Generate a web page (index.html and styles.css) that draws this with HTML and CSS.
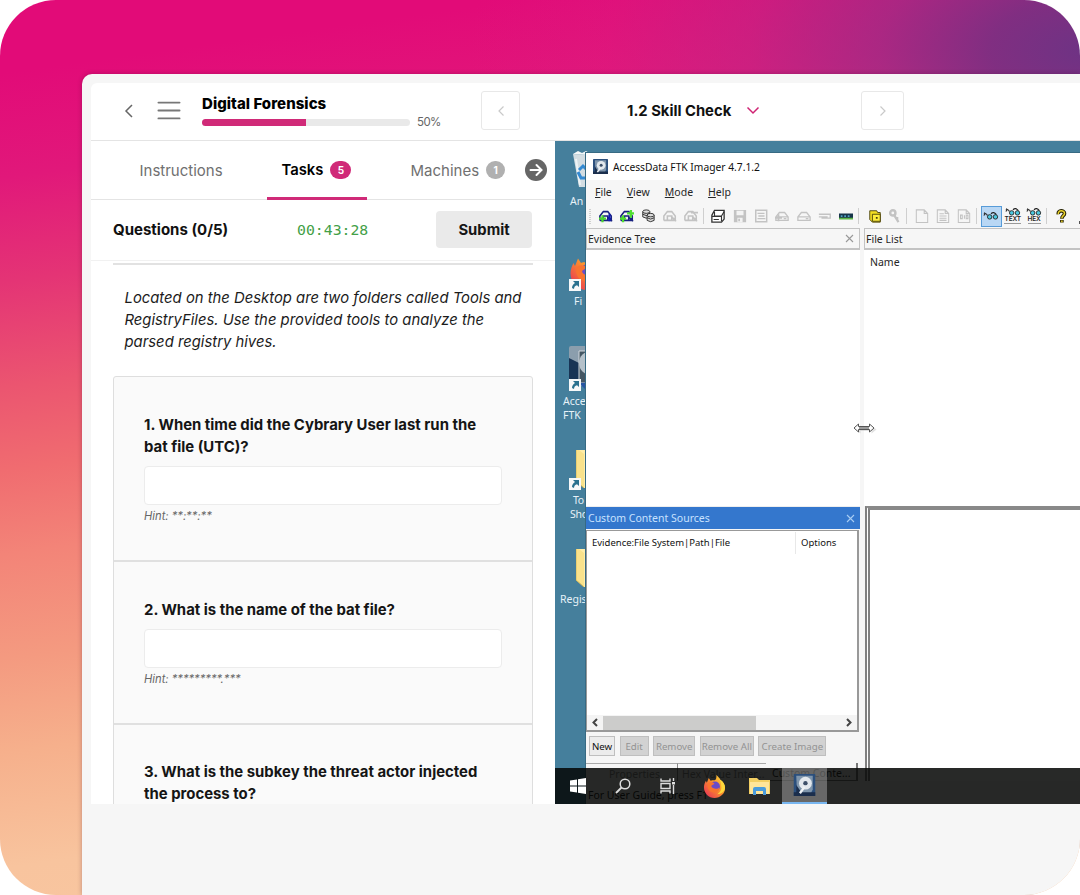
FILE: index.html
```html
<!DOCTYPE html>
<html lang="en">
<head>
<meta charset="utf-8">
<title>Digital Forensics</title>
<link rel="stylesheet" href="styles.css">
</head>
<body>
<svg class="defs" aria-hidden="true">
  <defs>
    <linearGradient id="fox" x1="1" y1="0" x2="0" y2="1"><stop offset="0" stop-color="#ffe13c"/><stop offset=".45" stop-color="#fb922c"/><stop offset="1" stop-color="#e5265c"/></linearGradient>
    <symbol id="firefox" viewBox="0 0 24 24">
      <path d="M14 0c2 2 3 3 4 5 3 2 5 5 5 9 0 5-5 10-11 10S1 19 1 13c0-3 1-5 2-7l1 2 2-5 2 3c2-1 4 0 5-1s1-3 1-5z" fill="url(#fox)"/>
      <circle cx="12.500" cy="12" r="5.200" fill="#6b4bc8"/>
      <path d="M5 9c2-2 5-2 7 0l-3 2c-1 1 1 3 3 3 2 1 4 0 5-1 0 4-4 6-7 5-4-1-6-5-5-9z" fill="#f9742f"/>
      <path d="M14 0c2 3 5 6 5 11 1 4-1 7-4 9 4 0 8-3 8-7 0-3-2-6-5-8-1-2-3-3-4-5z" fill="#ffd83b"/>
    </symbol>
    <symbol id="disk" viewBox="0 0 24 24">
      <rect width="24" height="24" rx="1" fill="#2b4f7c"/><path d="M3 2h18v15l-3 6H4z" fill="#7f95ab"/><path d="M3 12l7 10H3zM0 20h24v4H0z" fill="#1b2e4c"/>
      <circle cx="13" cy="10" r="7" fill="#e2e8ed"/><circle cx="13" cy="10" r="2.400" fill="#3d5069"/><path d="M12 14l-5 7" stroke="#eef2f5" stroke-width="2.500"/>
    </symbol>
    <symbol id="shortcut" viewBox="0 0 12 12"><path d="M0 0h12v12H0z" fill="#f6f8f9"/><path d="M4 2h6v6L8 6.300C6 7 5 8 5 10L3 9c0-2 1-4 3-5z" fill="#28718f"/></symbol>
    <symbol id="folder" viewBox="0 0 24 38"><path d="M0 0h24v38H8L0 31z" fill="#f9e28c"/><path d="M3 0h21v38H8V4z" fill="#ffeda8"/><path d="M0 0v31l8 7" fill="none" stroke="#d8bb5b"/></symbol>
    <symbol id="drive" viewBox="0 0 16 16"><path d="M1 9l4-5h6l4 5v4H1zM1 9h14M10 11h3" fill="none" stroke="currentColor" stroke-width="1.500"/></symbol>
    <symbol id="car" viewBox="0 0 16 16"><path d="M1 13V8l4-5h5l4 5v5M5 12V8h5v5M1 13h13M10 9l5 5" fill="none" stroke="currentColor" stroke-width="1.800"/></symbol>
    <symbol id="floppy" viewBox="0 0 16 16"><path d="M1 1h14v14H1z" fill="currentColor"/><path d="M4 2h8v5H4zM5 10h6v5H5z" fill="#f3f3f3"/><path d="M6 11h2v3H6z" fill="currentColor"/></symbol>
    <symbol id="page" viewBox="0 0 16 16"><path d="M1.500 1h9l4 4v10.500h-13zM10.500 1v4h4" fill="none" stroke="currentColor" stroke-width="1.200"/></symbol>
    <symbol id="glasses" viewBox="0 0 18 9"><path d="M1 4q2-4 4 0M9 2q3-3 6 1M1 1l2 1" fill="none" stroke="#222" stroke-width="1.300"/><circle cx="7.500" cy="5.500" r="2.500" fill="#4cc9e0" stroke="#222"/><circle cx="14" cy="5.500" r="2.500" fill="#4cc9e0" stroke="#222"/></symbol>
  </defs>
</svg>
<div class="stage">
  <div class="device">
    <div class="app">
      <header class="topbar">
        <svg class="back" viewBox="0 0 10 14"><path d="M8 1L2 7l6 6"/></svg>
        <svg class="burger" viewBox="0 0 22 18"><path d="M1 1.500h20M1 9h20M1 16.500h20"/></svg>
        <div class="course">
          <div class="course-name">Digital Forensics</div>
          <div class="progress-row"><div class="progress"><div class="progress-fill" style="width:50%"></div></div><span class="percent">50%</span></div>
        </div>
        <div class="step prev"><svg viewBox="0 0 8 12"><path d="M6.500 1.500L2 6l4.500 4.500"/></svg></div>
        <div class="lesson"><span>1.2 Skill Check</span><svg viewBox="0 0 14 9"><path d="M1.500 1.500L7 7l5.500-5.500"/></svg></div>
        <div class="step next"><svg viewBox="0 0 8 12"><path d="M1.500 1.500L6 6l-4.500 4.500"/></svg></div>
      </header>
      <div class="main">
        <section class="tasks">
          <nav class="tabs">
            <div class="tab tab-instructions">Instructions</div>
            <div class="tab tab-tasks">Tasks<span class="badge">5</span></div>
            <div class="tab tab-machines">Machines<span class="badge badge-grey">1</span></div>
            <svg class="more" viewBox="0 0 22 22"><circle cx="11" cy="11" r="11"/><path d="M5.500 11H16M11.500 6l5 5-5 5"/></svg>
          </nav>
          <div class="status"><div class="count">Questions (0/5)</div><div class="timer">00:43:28</div><div class="submit">Submit</div></div>
          <div class="content">
            <p class="intro">Located on the Desktop are two folders called Tools and<br>RegistryFiles. Use the provided tools to analyze the<br>parsed registry hives.</p>
            <div class="questions">
              <article class="question q1"><h3>1. When time did the Cybrary User last run the<br>bat file (UTC)?</h3><div class="answer"></div><div class="hint">Hint: **:**:**</div></article>
              <article class="question q2"><h3>2. What is the name of the bat file?</h3><div class="answer"></div><div class="hint">Hint: *********.***</div></article>
              <article class="question q3"><h3>3. What is the subkey the threat actor injected<br>the process to?</h3></article>
            </div>
          </div>
        </section>
        <section class="desktop">
          <div class="shortcut bin">
            <svg viewBox="0 0 30 36"><path d="M0 3L30 5l-4 31H6z" fill="#d3dde2"/><path d="M0 3l5-3 4 2 4-2 5 3 8-1 4 3-30-2z" fill="#f4f7f8"/><path d="M3 8l4 26" stroke="#eef3f5" stroke-width="2"/><path d="M6 19l4-4 3 3M5 21l3 6h5" stroke="#348ad2" stroke-width="3" fill="none"/></svg>
            <span>An</span>
          </div>
          <div class="shortcut fx"><svg viewBox="0 0 36 38"><use href="#firefox" width="36" height="38"/><use href="#shortcut" y="26" width="12" height="12"/></svg><span>Fi</span></div>
          <div class="shortcut ftk"><svg viewBox="0 0 38 45"><rect width="38" height="40" rx="2" fill="#8b9ead"/><path d="M0 12l10 5v17H0z" fill="#183455"/><path d="M10 5h26v32H10z" fill="#445663" stroke="#d0d7dc"/><circle cx="22" cy="17" r="12" fill="#b5c1ca"/><path d="M10 37l8 8h12V36z" fill="#2755a3"/><use href="#shortcut" y="33" width="12" height="12"/></svg><span>Acce<br>FTK</span></div>
          <div class="shortcut tools"><svg viewBox="0 0 36 41"><use href="#folder" x="7" width="24" height="38"/><use href="#shortcut" y="28" width="12" height="12"/></svg><span>To<br>Sho</span></div>
          <div class="shortcut reg"><svg viewBox="0 0 24 38"><use href="#folder" width="24" height="38"/></svg><span>Regis</span></div>

          <div class="window">
            <div class="titlebar"><svg><use href="#disk" width="15" height="15"/></svg><span>AccessData FTK Imager 4.7.1.2</span></div>
            <div class="menubar"><span><u>F</u>ile</span><span><u>V</u>iew</span><span><u>M</u>ode</span><span><u>H</u>elp</span></div>
            <div class="toolbar">
              <i class="grip"></i>
              <b class="tool"><svg class="blue" viewBox="0 0 16 16"><use href="#car"/><path d="M0 11h8M4 7v8" stroke="#4bd630" stroke-width="2.600"/><path d="M12 6v8" stroke="#101cb5" stroke-width="2.500"/></svg></b>
              <b class="tool"><svg class="blue" viewBox="0 0 16 16"><use href="#car"/><path d="M0 11h7M3.500 7v8M8 5h8M12.500 1v9" stroke="#4fdf30" stroke-width="2.600"/></svg></b>
              <b class="tool"><svg viewBox="0 0 16 16"><g fill="#ddd" stroke="#222"><path d="M2 3v6q4 3 8 0V3"/><ellipse cx="6" cy="3" rx="4" ry="2"/><path d="M2 6q4 3 8 0M7 7v6q4 3 8 0V7"/><ellipse cx="11" cy="7" rx="4" ry="2"/><path d="M7 10q4 3 8 0"/></g></svg></b>
              <b class="tool off"><svg viewBox="0 0 16 16"><use href="#car"/></svg></b>
              <b class="tool off"><svg viewBox="0 0 16 16"><use href="#car"/><path d="M8 4h8" stroke="currentColor" stroke-width="2"/></svg></b>
              <i class="sep"></i>
              <b class="tool"><svg viewBox="0 0 16 16"><path d="M4 1.500h11v10L12 15H1V7z" fill="#fff" stroke="#333" stroke-width="1.500"/><path d="M4 3v5h8l3-5M1 8.500h11V14M3 12h6" fill="none" stroke="#333" stroke-width="1.300"/></svg></b>
              <b class="tool off"><svg viewBox="0 0 16 16"><use href="#floppy"/></svg></b>
              <b class="tool off"><svg viewBox="0 0 16 16"><path d="M2 1.500h12.500v13H2zM4 5h8M4 11h9M5 8h7" fill="none" stroke="currentColor" stroke-width="1.700"/></svg></b>
              <b class="tool off"><svg viewBox="0 0 16 16"><use href="#drive"/><path d="M0 10h8M4 6v8" stroke="currentColor" stroke-width="2"/></svg></b>
              <b class="tool off"><svg viewBox="0 0 16 16"><use href="#drive"/></svg></b>
              <b class="tool off"><svg viewBox="0 0 16 16"><path d="M1 6h13v4.500H4M1 9h10" fill="none" stroke="currentColor" stroke-width="1.500"/></svg></b>
              <b class="tool"><svg viewBox="0 0 16 16"><path d="M0 5h16v6H0z" fill="#17344b"/><path d="M2 7h2v2H2zM6 7h2v2H6zM10 7h2v2h-2z" fill="#52a2c4"/><path d="M0 11h16" stroke="#5db546" stroke-width="2"/></svg></b>
              <i class="sep"></i>
              <b class="tool folder-tool"><svg viewBox="0 0 16 16"><path d="M2 12V2h8l1 2h3v11H5z" fill="#f4de22" stroke="#443c08"/><path d="M5 6h9v8H5z" fill="#ffee3a" stroke="#443c08"/><path d="M9 9h2v2H9z" fill="#443c08"/></svg></b>
              <b class="tool off"><svg viewBox="0 0 16 16"><circle cx="5.500" cy="4.500" r="3" fill="none" stroke="currentColor" stroke-width="2.800"/><path d="M7 7l5 8M10.500 9v4" stroke="currentColor" stroke-width="2.600"/></svg></b>
              <i class="sep"></i>
              <b class="tool off"><svg viewBox="0 0 16 16"><use href="#page"/></svg></b>
              <b class="tool off"><svg viewBox="0 0 16 16"><use href="#page"/><path d="M4 5.500h5M4 8h8M4 10.500h8M4 13h8" stroke="currentColor" stroke-width="1.200"/></svg></b>
              <b class="tool off"><svg viewBox="0 0 16 16"><use href="#page"/><path d="M4 7h2v4H4zM8.500 7v4M10.500 7h2v4h-2z" fill="none" stroke="currentColor" stroke-width="1.200"/></svg></b>
              <i class="sep"></i>
              <b class="tool active"><svg viewBox="0 0 16 16"><use href="#glasses" y="4" width="16" height="8"/></svg></b>
              <b class="tool word"><svg viewBox="0 0 18 9"><use href="#glasses" width="18" height="9"/></svg><small>TEXT</small></b>
              <b class="tool word"><svg viewBox="0 0 18 9"><use href="#glasses" width="18" height="9"/></svg><small>HEX</small></b>
              <i class="sep"></i>
              <b class="tool"><svg viewBox="0 0 16 16"><path d="M5 6c-1-5 7-5 7-1 0 3-3 2-3 6M9 12.500v3" fill="none" stroke="#2d2908" stroke-width="4.200"/><path d="M5 6c-1-5 7-5 7-1 0 3-3 2-3 5.500M9 13v2" fill="none" stroke="#ead22c" stroke-width="1.700"/></svg></b>
              <i class="overflow-mark"></i>
            </div>
            <div class="panes">
              <div class="left-col">
                <div class="pane-head"><span>Evidence Tree</span><svg viewBox="0 0 9 9"><path d="M1 1l7 7M8 1L1 8"/></svg></div>
                <div class="tree"></div>
                <div class="pane-head selected"><span>Custom Content Sources</span><svg viewBox="0 0 9 9"><path d="M1 1l7 7M8 1L1 8"/></svg></div>
                <div class="sources">
                  <div class="columns"><span class="col-evidence">Evidence:File System|Path|File</span><span class="col-options">Options</span></div>
                  <div class="scroll"><svg viewBox="0 0 6 9"><path d="M5 1L1.500 4.500 5 8"/></svg><div class="track"><div class="thumb"></div></div><svg viewBox="0 0 6 9"><path d="M1 1l3.500 3.500L1 8"/></svg></div>
                </div>
                <div class="buttons"><span class="btn enabled b-new">New</span><span class="btn b-edit">Edit</span><span class="btn b-rem">Remove</span><span class="btn b-all">Remove All</span><span class="btn b-img">Create Image</span></div>
                <div class="sheet-tabs"><span class="st1">Properties</span><span class="st2">Hex Value Inter...</span><span class="st3">Custom Conte...</span></div>
                <div class="statusline">For User Guide, press F1</div>
              </div>
              <div class="right-col">
                <div class="pane-head"><span>File List</span></div>
                <div class="files">Name</div>
                <div class="viewer"></div>
              </div>
            </div>
          </div>
          <svg class="cursor" viewBox="0 0 24 14"><path d="M1 6l5-4v2.500h11V2l5 4-5 4V7.500H6V10z" fill="#aaa" opacity=".35" transform="translate(1.500 1.500)"/><path d="M1 6l4.500-4v2.500h11V2L21 6l-4.500 4V7.500h-11V10z" fill="#fff" stroke="#555"/><path d="M6 6h10" stroke="#999" stroke-width="2"/></svg>
          <div class="taskbar">
            <div class="slot"><svg width="16" height="16" viewBox="0 0 16 16"><path d="M0 2.500l7-1v6H0zM8 1.300L16 0v7.500H8zM0 8.500h7v6l-7-1zM8 8.500h8V16l-8-1.300z" fill="#fff"/></svg></div>
            <div class="slot"><svg width="16" height="16" viewBox="0 0 16 16"><circle cx="10" cy="6" r="4.800" fill="none" stroke="#ddd" stroke-width="1.500"/><path d="M6.500 9.500L1 15" stroke="#ddd" stroke-width="1.800"/></svg></div>
            <div class="slot"><svg width="16" height="16" viewBox="0 0 16 16"><path d="M1 .5V3h9V.5M1 5.500h9v5H1zM1 15.500V13h9v2.500M13.500 0v3M13.500 7v9" fill="none" stroke="#ddd" stroke-width="1.400"/><path d="M12 4h3v2.500h-3z" fill="#ddd"/></svg></div>
            <div class="slot pinned"><svg width="23" height="23"><use href="#firefox" width="23" height="23"/></svg></div>
            <div class="slot"><svg width="21" height="18" viewBox="0 0 21 18"><path d="M0 1h8l2 2h11v14H0z" fill="#f3cf63"/><path d="M1 5h19v12H1z" fill="#ffe59a"/><path d="M4 18v-6q0-2 2-2h9q2 0 2 2v6h-3v-4H7v4z" fill="#4a9bdc"/></svg></div>
            <div class="slot current"><svg width="23" height="22" viewBox="0 0 24 24"><use href="#disk"/></svg></div>
          </div>
        </section>
      </div>
    </div>
  </div>
</div>
</body>
</html>
```

FILE: styles.css
```css
* { box-sizing: border-box; }
body { margin: 0; background: #fff; font-family: Inter, "Liberation Sans", sans-serif; }
.defs { position: absolute; width: 0; height: 0; }

.stage {
  width: 1080px; height: 895px; overflow: hidden; border-radius: 56px;
  padding: 74px 0 0 82px;
  background:
    radial-gradient(ellipse 620px 330px at 1090px 50px, #6d3384 0%, rgba(120,48,130,.92) 16%, rgba(150,46,134,.72) 34%, rgba(185,40,134,.5) 55%, rgba(215,32,132,.25) 78%, rgba(222,26,130,0) 100%),
    linear-gradient(172deg, #e20b78 0%, #e20b78 7%, #e1187a 17%, #e43475 27%, #eb5570 37%, #f06c70 45%, #f38478 53%, #f49a80 63%, #f6b08c 72%, #f8c49e 83%, #f9c9a2 100%);
}
.device { height: 821px; padding: 9px 0 0 9px; background: #f6f6f6; border-radius: 10px 0 0 0; box-shadow: 0 0 5px rgba(60,0,40,.3); }
.app { height: 721px; background: #fff; border-radius: 6px 0 0 0; overflow: hidden; display: flex; flex-direction: column; }

.topbar { height: 58px; flex: none; display: flex; align-items: center; border-bottom: 1px solid #e4e4e4; padding: 0 0 2px 33px; }
.topbar svg { fill: none; flex: none; }
.back { width: 10px; height: 14px; stroke: #666; stroke-width: 1.5; }
.burger { width: 24px; height: 19px; margin-left: 23px; stroke: #777; stroke-width: 1.8; stroke-linecap: round; }
.course { width: 260px; margin-left: 21px; align-self: flex-start; padding-top: 11px; }
.course-name { font-size: 15px; font-weight: 800; line-height: 19px; letter-spacing: .04px; color: #000; }
.progress-row { display: flex; align-items: center; gap: 7px; height: 16px; margin-top: 1px; }
.progress { width: 208px; height: 7px; border-radius: 4px; background: #e9e9e9; overflow: hidden; }
.progress-fill { height: 100%; background: #d02a78; }
.percent { font-size: 11.5px; letter-spacing: -.6px; color: #666; }
.step { display: flex; align-items: center; justify-content: center; height: 39px; border: 1px solid #e8e8e8; border-radius: 3px; }
.step svg { width: 8px; height: 12px; stroke: #c9c9c9; stroke-width: 1.2; }
.prev { width: 39px; margin-left: 19px; }
.next { width: 43px; margin-left: 101px; }
.lesson { width: 133px; margin-left: 107px; display: flex; align-items: center; justify-content: space-between; font-size: 14.8px; font-weight: 700; color: #111; white-space: nowrap; }
.lesson svg { width: 14px; height: 9px; stroke: #cf2373; stroke-width: 1.5; }

.main { flex: 1; display: flex; min-height: 0; }
.tasks { width: 464px; display: flex; flex-direction: column; overflow: hidden; flex: none; }
.tabs { height: 59px; flex: none; display: flex; align-items: center; border-bottom: 1px solid #e4e4e4; padding-left: 48.5px; font-size: 15px; color: #707070; }
.tab { height: 59px; display: flex; align-items: center; white-space: nowrap; }
.tab-instructions { width: 127px; }
.tab-tasks { width: 100px; padding-left: 15px; border-bottom: 3px solid #d02a78; padding-top: 3px; color: #000; font-weight: 600; font-size: 14.8px; }
.tab-machines { width: 94px; margin-left: 44px; letter-spacing: 0; }
.badge { display: inline-flex; align-items: center; justify-content: center; width: 21px; height: 18px; margin-left: 7px; border-radius: 9px; background: #d02a78; color: #fff; font-size: 10px; font-weight: 700; letter-spacing: 0; flex: none; }
.badge-grey { background: #b0b0b0; width: 19px; }
.more { width: 22px; height: 22px; margin-left: 20px; flex: none; fill: #666; }
.more path { fill: none; stroke: #fff; stroke-width: 2; stroke-linecap: round; }
.status { height: 61px; flex: none; display: flex; align-items: center; padding: 0 23px 1px 22px; border-bottom: 1px solid #f1f1f1; }
.count { width: 184px; font-size: 15px; font-weight: 700; color: #111; }
.timer { font-family: "DejaVu Sans Mono", monospace; font-size: 14.8px; color: #43a047; width: 139px; }
.submit { width: 96px; height: 37px; border-radius: 4px; background: #eaeaea; display: flex; align-items: center; justify-content: center; font-size: 14.8px; font-weight: 700; color: #161616; }
.content { padding: 2px 22px 0; }
.intro { margin: 0; border-top: 2px solid #e2e2e2; padding: 22px 0 22px 11.5px; font-size: 14.83px; line-height: 22.2px; font-style: italic; color: #1c1c1c; white-space: nowrap; }
.questions { border: 1.5px solid #dedede; border-radius: 3px; background: #fafafa; }
.question { padding: 37px 30px 0; border-top: 2px solid #e0e0e0; }
.question:first-child { border-top: 0; }
.question h3 { margin: 0; font-size: 14.9px; line-height: 22.3px; font-weight: 700; color: #151515; white-space: nowrap; }
.q1 { height: 183.500px; }
.q2 { height: 162.500px; padding-top: 36.5px; }
.q3 { height: 160px; padding-top: 36.5px; }
.answer { height: 39px; margin-top: 8px; background: #fff; border: 1px solid #ececec; border-radius: 4px; }
.hint { margin-top: 4px; font-size: 11.2px; line-height: 15px; font-style: italic; color: #666; }

/* Remote desktop */
.desktop { flex: 1; position: relative; overflow: hidden; background: #457f9c; font-family: "Noto Sans", "Open Sans", sans-serif; font-size: 10.5px; color: #262626; white-space: nowrap; }
.shortcut { position: absolute; color: #e7f2f8; line-height: 14px; }
.shortcut svg { display: block; }
.shortcut span { display: block; }
.bin { left: 18px; top: 10px; } .bin svg { width: 30px; height: 36px; } .bin span { margin: 7px 0 0 -3px; }
.fx { left: 14px; top: 112px; } .fx svg { width: 36px; height: 38px; } .fx span { margin: 3px 0 0 5px; }
.ftk { left: 14px; top: 205px; } .ftk svg { width: 38px; height: 45px; } .ftk span { margin: 3px 0 0 -6px; }
.tools { left: 14px; top: 309px; } .tools svg { width: 36px; height: 41px; } .tools span { margin: 2px 0 0 1px; text-indent: 3px; letter-spacing: -.3px; }
.reg { left: 21px; top: 408px; } .reg svg { width: 24px; height: 38px; } .reg span { margin: 5px 0 0 -16px; }

.window { position: absolute; left: 31px; top: 12px; width: 520px; height: 660px; background: #f6f6f6; box-shadow: 0 0 0 1px #376a83; display: flex; flex-direction: column; }
.titlebar { height: 27px; flex: none; background: #fff; display: flex; align-items: center; gap: 5px; padding-left: 7px; font-size: 10.25px; color: #111; }
.titlebar svg { width: 15px; height: 15px; }
.menubar { height: 24px; flex: none; display: flex; align-items: center; padding-left: 9px; gap: 15px; }
.menubar u { text-decoration-thickness: 1px; text-underline-offset: 1px; text-decoration-skip-ink: none; }
.toolbar { height: 24px; flex: none; display: flex; align-items: center; padding-left: 3px; }
.grip { width: 2px; height: 15px; margin-right: 4px; background: repeating-linear-gradient(#d0d0d0 0 1px, transparent 1px 2px); flex: none; }
.tool { width: 21.4px; height: 21px; flex: none; display: flex; align-items: center; justify-content: center; font-weight: 400; }
.tool svg { width: 14px; height: 14px; }
.tool.off { color: #c3c3c3; }
.folder-tool svg { margin-left: 3px; }
.blue { color: #18217f; }
.active { background: #b9d7f4; border: 1px solid #579bd8; }
.active svg { width: 16px; height: 16px; }
.word { flex-direction: column; }
.word svg { width: 16px; height: 8px; }
.word small { font: 600 6.5px/7px Inter, sans-serif; letter-spacing: -.1px; border-bottom: 1px solid #999; }
.sep { width: 5.5px; height: 16px; flex: none; border-left: 1px solid #cfcfcf; margin-left: 1px; margin-right: -1px; }
.overflow-mark { width: 4px; height: 3px; background: #555; margin: 12px 0 0 7px; flex: none; }

.panes { flex: 1; display: flex; gap: 4px; min-height: 0; }
.left-col { width: 274px; flex: none; display: flex; flex-direction: column; }
.right-col { flex: 1; display: flex; flex-direction: column; }
.pane-head { height: 22px; flex: none; display: flex; align-items: center; justify-content: space-between; border: 1px solid #c3c3c3; border-width: 1px 1px 2px; padding: 0 5px 0 1px; }
.pane-head svg { width: 9px; height: 9px; stroke: #999; stroke-width: 1.1; }
.tree { height: 257px; flex: none; background: #fff; border-bottom: 1px solid #eee; }
.selected { background: #3477cd; border: 0; color: #c8e2ff; padding-left: 2px; }
.selected svg { stroke: #a9cdf3; }
.sources { height: 202px; flex: none; width: 273px; margin-top: 1px; background: #fff; border: 1px solid #999; border-width: 1px 2px 2px 1px; display: flex; flex-direction: column; justify-content: space-between; }
.columns { display: flex; height: 24px; align-items: center; font-size: 9.5px; color: #111; }
.col-evidence { width: 209px; padding-left: 5px; border-right: 1px solid #e8e8e8; height: 22px; line-height: 22px; }
.col-options { padding-left: 5px; height: 22px; line-height: 22px; }
.scroll { height: 15px; background: #f4f4f4; display: flex; align-items: center; justify-content: space-between; padding: 0 5px; }
.scroll svg { width: 6px; height: 9px; fill: none; stroke: #444; stroke-width: 2; }
.track { width: 242px; height: 14px; }
.thumb { width: 153px; height: 14px; background: #cccccb; margin-left: 2px; }
.buttons { height: 31px; flex: none; display: flex; align-items: center; gap: 4.6px; padding: 0 0 3px 3px; }
.btn { height: 20px; border: 1px solid #bfbfbf; background: #d2d2d2; color: #929292; display: flex; align-items: center; justify-content: center; flex: none; font-size: 9.7px; }
.enabled { background: #ececec; color: #111; }
.b-new { width: 26px; } .b-edit { width: 29px; } .b-rem { width: 42px; } .b-all { width: 54px; } .b-img { width: 68px; }
.sheet-tabs { height: 20px; flex: none; display: flex; width: 272px; color: #888; }
.sheet-tabs span { height: 18px; padding-top: 3px; border-top: 1px solid #aaa; }
.sheet-tabs .st1 { width: 92px; padding-left: 23px; border-right: 1px solid #888; }
.sheet-tabs .st2 { width: 88px; padding-left: 4px; }
.sheet-tabs .st3 { flex: 1; padding-left: 6px; border-top: 0; border-right: 2px solid #777; border-bottom: 1px solid #777; color: #222; }
.statusline { padding: 5px 0 0 2px; color: #111; }
.files { height: 256px; flex: none; background: #fff; padding: 5px 0 0 6px; }
.viewer { height: 275px; margin-left: 1px; background: #fff; border-top: 4px solid #898989; border-left: 5px double #808080; }
.cursor { position: absolute; left: 298px; top: 281px; width: 24px; height: 14px; }

.taskbar { position: absolute; left: 0; right: 0; bottom: 0; height: 36px; display: flex; background: rgba(5,6,5,.86); }
.slot { width: 45px; height: 36px; display: flex; align-items: center; justify-content: center; flex: none; }
.pinned { margin-left: 2px; }
.current { background: rgba(255,255,255,.3); border-bottom: 2px solid #78b6f0; }
```
